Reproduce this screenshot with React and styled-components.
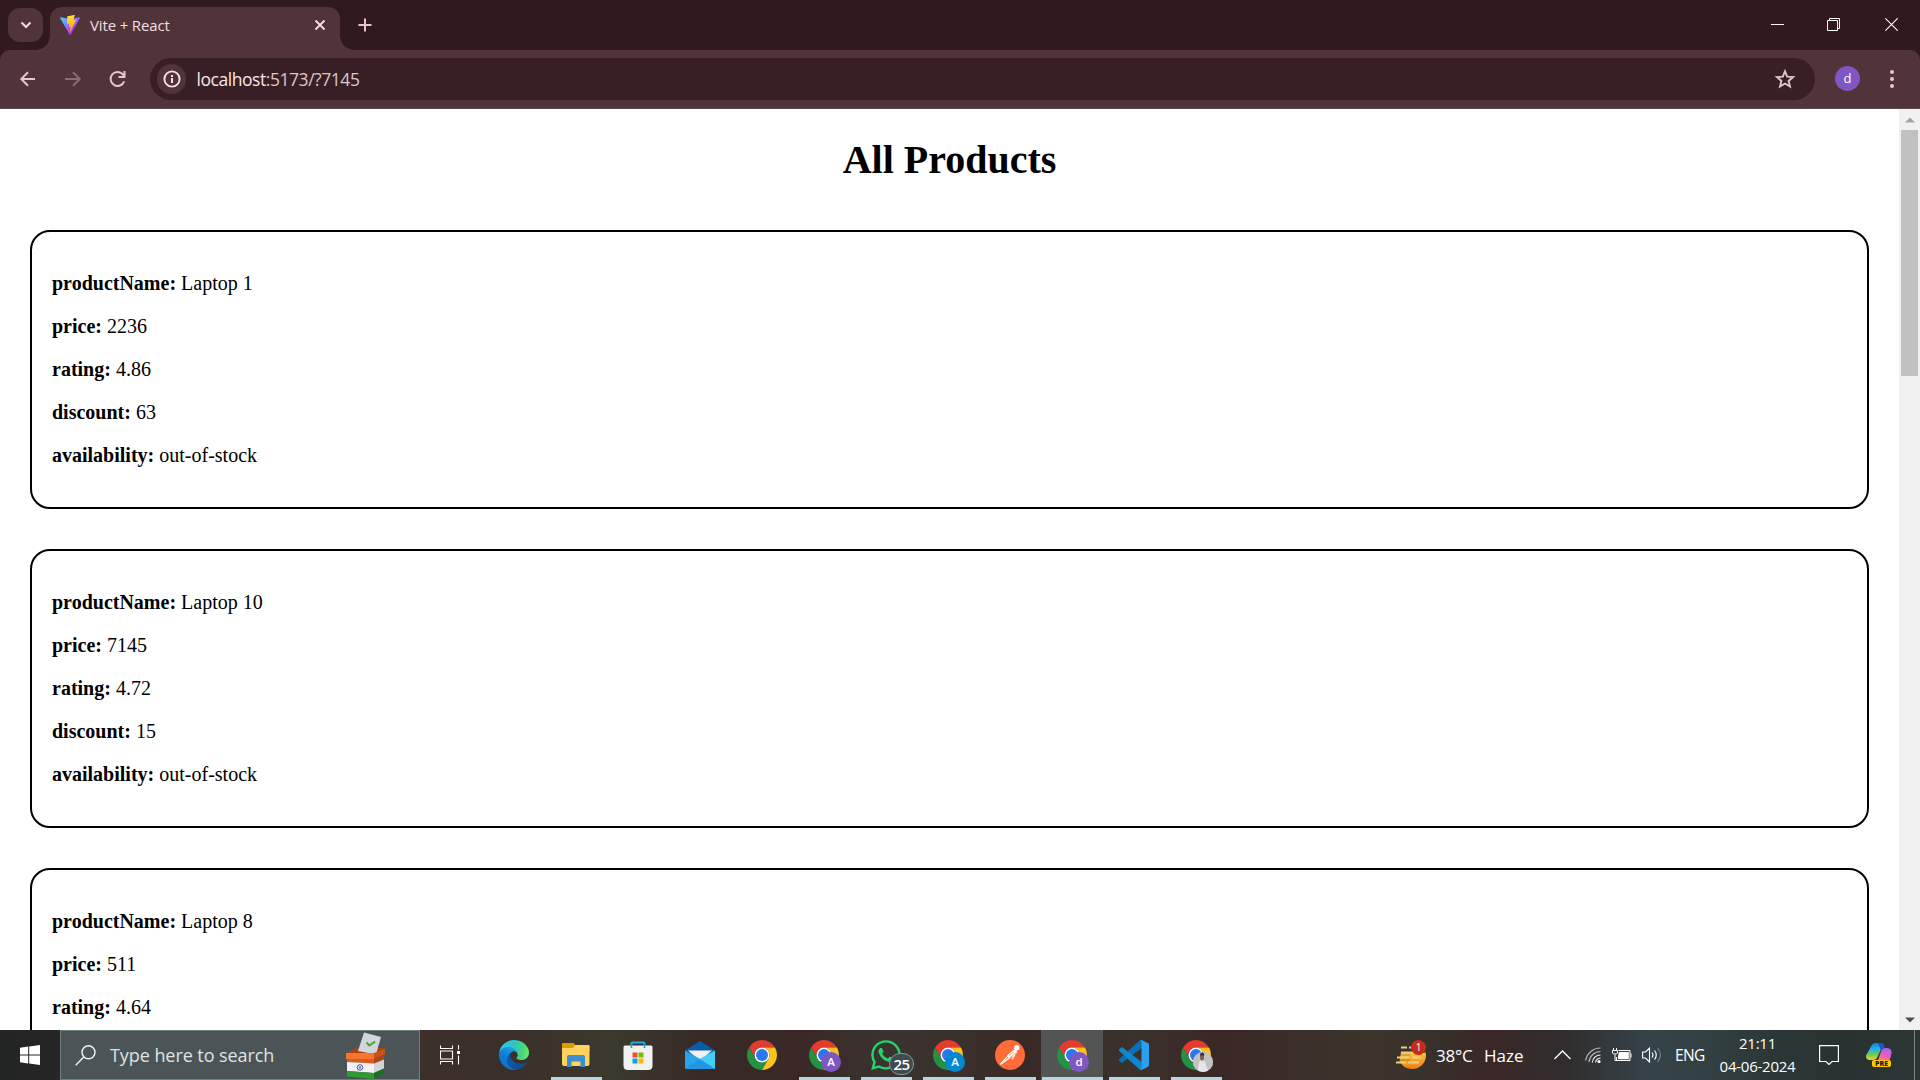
import React from 'react';
import styled, { createGlobalStyle } from 'styled-components';
import { FaWhatsapp } from 'react-icons/fa';

const GlobalStyle = createGlobalStyle`
  * { box-sizing: border-box; }
  html, body { margin: 0; padding: 0; overflow: hidden; }
  svg { display: block; flex: none; }
`;

const ui = `'Open Sans', 'Noto Sans', sans-serif`;
const colors = {
  frame: '#301a20',
  toolbar: '#50343a',
  omnibox: '#381f25',
  pink: '#e9c4cb',
};

/* ---------- Window ---------- */

const Screen = styled.div`
  width: 1920px;
  height: 1080px;
  display: flex;
  flex-direction: column;
  background: #fff;
  overflow: hidden;
  white-space: nowrap;
`;

const TabStrip = styled.header`
  height: 50px;
  flex: none;
  display: flex;
  align-items: flex-start;
  background: ${colors.frame};
  padding-left: 8px;
`;

const TabSearch = styled.div`
  width: 35px;
  height: 34px;
  margin: 8px 7px 0 0;
  border-radius: 12px;
  background: ${colors.toolbar};
  display: flex;
  align-items: center;
  justify-content: center;
`;

const Tab = styled.div`
  position: relative;
  width: 290px;
  height: 43px;
  margin-top: 7px;
  padding: 0 13px 7px 10px;
  border-radius: 12px 12px 0 0;
  background: ${colors.toolbar};
  display: flex;
  align-items: center;
  &::before,
  &::after {
    content: '';
    position: absolute;
    bottom: 0;
    width: 14px;
    height: 14px;
  }
  &::before {
    left: -14px;
    background: radial-gradient(circle at 0 0, transparent 13.5px, ${colors.toolbar} 14px);
  }
  &::after {
    right: -14px;
    background: radial-gradient(circle at 100% 0, transparent 13.5px, ${colors.toolbar} 14px);
  }
`;

const TabTitle = styled.span`
  flex: 1;
  margin-left: 10px;
  font: 15px/20px ${ui};
  letter-spacing: -0.15px;
  color: #f1dfe2;
`;

const NewTab = styled.div`
  width: 50px;
  height: 50px;
  display: flex;
  align-items: center;
  justify-content: center;
`;

const WindowControls = styled.div`
  margin-left: auto;
  display: flex;
`;

const WindowButton = styled.div`
  width: ${(p) => p.$w}px;
  height: 49px;
  display: flex;
  align-items: center;
  justify-content: center;
`;

const ToolbarBack = styled.div`
  flex: none;
  background: ${colors.frame};
`;

const Toolbar = styled.nav`
  height: 59px;
  padding: 8px 0 9px;
  display: flex;
  align-items: center;
  border-radius: 10px 10px 0 0;
  background: ${colors.toolbar};
  border-bottom: 1px solid #60464b;
`;

const NavGroup = styled.div`
  width: 150px;
  flex: none;
  padding-left: 17px;
  display: flex;
  gap: 25px;
`;

const Omnibox = styled.div`
  width: 1665px;
  flex: none;
  height: 42px;
  padding: 0 19px 0 7px;
  border-radius: 21px;
  background: ${colors.omnibox};
  display: flex;
  align-items: center;
`;

const SiteInfo = styled.div`
  width: 29px;
  height: 30px;
  border-radius: 15px;
  background: ${colors.toolbar};
  display: flex;
  align-items: center;
  justify-content: center;
`;

const Address = styled.span`
  flex: 1;
  margin-left: 10.5px;
  font: 17.5px/26px ${ui};
  letter-spacing: -0.45px;
  color: #dcc7cb;
  b {
    font-weight: 400;
    color: #f8e6e9;
  }
`;

const Avatar = styled.div`
  width: 25px;
  flex: none;
  height: 25px;
  margin-left: 20px;
  border-radius: 50%;
  background: #7e57c2;
  color: #fff;
  font: 13px/24px ${ui};
  text-align: center;
`;

const MenuSlot = styled.div`
  flex: 1;
  display: flex;
  padding-left: 30px;
`;

/* ---------- Page ---------- */

const Viewport = styled.main`
  height: 921px;
  flex: none;
  display: flex;
`;

const Page = styled.div`
  width: 1899px;
  height: 921px;
  overflow: hidden;
  padding: 27px 30px 0;
  font-family: 'Liberation Serif', 'Times New Roman', serif;
  color: #000;
`;

const Title = styled.h1`
  margin: 0 0 47px;
  font-size: 40px;
  line-height: 47px;
  text-align: center;
`;

const Card = styled.section`
  height: 279px;
  margin-bottom: 40px;
  padding: 40px 20px;
  border: 2px solid #000;
  border-radius: 20px;
  display: flex;
  flex-direction: column;
  gap: 20px;
`;

const Field = styled.p`
  margin: 0;
  font-size: 20px;
  line-height: 23px;
`;

const Scrollbar = styled.aside`
  width: 21px;
  height: 921px;
  padding: 0 2px;
  background: #f1f1f1;
  display: flex;
  flex-direction: column;
  justify-content: space-between;
`;

const ScrollArrow = styled.div`
  height: 21px;
  display: flex;
  align-items: center;
  justify-content: center;
`;

const ScrollThumb = styled.div`
  height: 246px;
  margin-bottom: auto;
  background: #c1c1c1;
`;

/* ---------- Taskbar ---------- */

const Taskbar = styled.footer`
  height: 50px;
  flex: none;
  display: flex;
  color: #fff;
  font-family: ${ui};
  background: linear-gradient(
    90deg,
    #232524 0, #252625 60px, #3d2f2a 420px, #3b2f29 500px, #3b392d 610px, #382a27 700px,
    #392826 800px, #3a3430 890px, #3a302c 960px, #392927 1020px, #3a322b 1130px, #3a2827 1220px,
    #3c352b 1370px, #37322c 1420px, #3a2727 1490px, #312e2f 1570px, #35444a 1650px, #344144 1700px,
    #2a3636 1780px, #293230 1850px, #2c3634 1914px
  );
`;

const Start = styled.div`
  width: 60px;
  display: flex;
  align-items: center;
  justify-content: center;
`;

const Search = styled.div`
  width: 360px;
  padding: 0 33px 0 14px;
  border: 1px solid #6f7f7f;
  background: #4b5557;
  display: flex;
  align-items: center;
`;

const SearchText = styled.span`
  flex: 1;
  margin-left: 14px;
  font-size: 18px;
  line-height: 24px;
  letter-spacing: -0.07px;
  color: #dfe3e4;
`;

const TaskView = styled.div`
  width: 63px;
  padding-left: 20px;
  display: flex;
  align-items: center;
`;

const AppSlot = styled.div`
  width: 62px;
  display: flex;
  flex-direction: column;
  align-items: center;
  background: ${(p) => (p.$active ? 'linear-gradient(90deg, transparent 0, transparent 0.5px, #535454 0.5px)' : 'none')};
  &::after {
    content: '';
    width: ${(p) => (p.$active ? 61 : 51)}px;
    height: 3px;
    background: ${(p) => (p.$running ? '#b9d5df' : 'transparent')};
  }
`;

const AppIcon = styled.div`
  position: relative;
  height: 47px;
  width: 30px;
  padding-top: 3px;
  display: flex;
  align-items: center;
  justify-content: center;
`;

const Badge = styled.span`
  position: absolute;
  left: ${(p) => (p.$count ? 18 : 12)}px;
  top: ${(p) => (p.$count ? 23 : 22)}px;
  width: ${(p) => (p.$count ? 25 : 20)}px;
  height: ${(p) => (p.$count ? 22 : 20)}px;
  border-radius: 11px;
  border: ${(p) => (p.$count ? '1px solid #86979d' : '0')};
  background: ${(p) => p.$bg};
  color: #fff;
  font-size: ${(p) => (p.$count ? 15 : 11.5)}px;
  font-weight: 600;
  line-height: 20px;
  text-align: center;
  letter-spacing: ${(p) => (p.$count ? '-0.5px' : '0')};
  overflow: hidden;
`;

const Tray = styled.div`
  margin-left: auto;
  width: 524px;
  display: flex;
  align-items: center;
`;

const Weather = styled.div`
  width: 158px;
  display: flex;
  align-items: center;
`;

const WeatherIcon = styled.div`
  position: relative;
  width: 30px;
  height: 50px;
  padding-top: 14px;
`;

const WeatherBadge = styled.span`
  position: absolute;
  left: 15px;
  top: 10px;
  width: 15px;
  height: 15px;
  border-radius: 50%;
  background: #c42b1c;
  font-size: 10px;
  line-height: 15px;
  text-align: center;
`;

const WeatherText = styled.span`
  margin-left: ${(p) => p.$gap}px;
  width: ${(p) => p.$w}px;
  padding-top: 1px;
  font-size: 17px;
  line-height: 24px;
  letter-spacing: ${(p) => p.$ls}px;
`;

const TrayIcon = styled.div`
  width: ${(p) => p.$w}px;
  display: flex;
`;

const Language = styled.span`
  width: 44px;
  font-size: 15.5px;
  letter-spacing: -0.7px;
`;

const Clock = styled.div`
  width: 77px;
  margin-right: 23px;
  font-size: 15px;
  line-height: 23px;
  letter-spacing: -0.25px;
  text-align: center;
  display: flex;
  flex-direction: column;
`;

const Copilot = styled.div`
  position: relative;
  width: 48px;
  height: 50px;
  padding-top: 12px;
`;

const PreTag = styled.span`
  position: absolute;
  left: 6px;
  top: 30px;
  width: 19px;
  height: 7px;
  border-radius: 2px;
  background: #ffc60a;
  color: #1c1c1c;
  font-size: 7px;
  font-weight: 800;
  line-height: 7px;
  text-align: center;
`;

const ShowDesktop = styled.div`
  width: 6px;
  height: 50px;
  border-left: 1px solid #7b8280;
`;

/* ---------- Icons ---------- */

const ViteLogo = () => (
  <svg width="20" height="20" viewBox="0 0 256 257">
    <defs>
      <linearGradient id="v1" x1="0" y1="8%" x2="58%" y2="78%">
        <stop offset="0" stopColor="#41d1ff" />
        <stop offset="1" stopColor="#bd34fe" />
      </linearGradient>
      <linearGradient id="v2" x1="43%" y1="2%" x2="50%" y2="89%">
        <stop offset="0" stopColor="#ffea83" />
        <stop offset=".083" stopColor="#ffdd35" />
        <stop offset="1" stopColor="#ffa800" />
      </linearGradient>
    </defs>
    <path fill="url(#v1)" d="M255.153 37.938 134.897 252.976c-2.483 4.44-8.862 4.466-11.382.048L.875 37.958c-2.746-4.814 1.371-10.646 6.827-9.67l120.385 21.517a6.537 6.537 0 0 0 2.322-.004l117.867-21.483c5.438-.991 9.574 4.796 6.877 9.62Z" />
    <path fill="url(#v2)" d="M185.432.063 96.44 17.501a3.268 3.268 0 0 0-2.634 3.014l-5.474 92.456a3.268 3.268 0 0 0 3.997 3.378l24.777-5.718c2.318-.535 4.413 1.507 3.936 3.838l-7.361 36.047c-.495 2.426 1.782 4.5 4.151 3.78l15.304-4.649c2.372-.72 4.652 1.36 4.15 3.788l-11.698 56.621c-.732 3.542 3.979 5.473 5.943 2.437l1.313-2.028 72.516-144.72c1.215-2.423-.88-5.186-3.54-4.672l-25.505 4.922c-2.396.462-4.435-1.77-3.759-4.114l16.646-57.705c.677-2.35-1.37-4.583-3.769-4.113Z" />
  </svg>
);

const Arrow = ({ flip, color }) => (
  <svg width="20" height="20" viewBox="0 0 20 20" fill="none" stroke={color} strokeWidth="2">
    <path d={flip ? 'M3 10h14M11 3.3l6.7 6.7-6.7 6.7' : 'M18 10H5M11 3.3 4.3 10l6.7 6.7'} />
  </svg>
);

const Reload = () => (
  <svg width="20" height="20" viewBox="0 0 20 20" fill="none" stroke={colors.pink} strokeWidth="2">
    <path d="M17.2 12.2a7 7 0 1 1-.9-6.3l1.200 1.700M17.500 2v6h-6" />
  </svg>
);

const Info = () => (
  <svg width="18" height="18" viewBox="0 0 18 18">
    <circle cx="9" cy="9" r="7.6" fill="none" stroke="#f5e3e6" strokeWidth="1.9" />
    <path d="M8 8h2v5H8zM8 5h2v1.9H8z" fill="#f5e3e6" />
  </svg>
);

const Star = () => (
  <svg width="22" height="22" viewBox="0 0 22 22" fill="none" stroke="#dcc7cb" strokeWidth="1.9">
    <path d="m11 3.300 2.200 5.300 5.900.500-4.500 3.800 1.400 5.600-5-3-5 3 1.400-5.600-4.500-3.800 5.900-.500z" />
  </svg>
);

const WindowsLogo = () => (
  <svg width="20" height="20" viewBox="0 0 20 20" fill="#fff">
    <path d="M0 2.8 8.2 1.6v7.9H0zM9.2 1.5 20 0v9.5H9.2zM0 10.5h8.2v7.9L0 17.2zM9.2 10.5H20V20L9.2 18.5z" />
  </svg>
);

const BallotBox = () => (
  <svg width="40" height="48" viewBox="0 0 40 48">
    <path d="M0 22.500 10 17h29l-11 7z" fill="#a8440f" />
    <path d="M18 1.500 35 6l-5 17.500L12 20z" fill="#d3d4dc" />
    <path d="m20.500 11.500 2.800 3 5.700-3.800" fill="none" stroke="#3fae2a" strokeWidth="2" />
    <path d="M0 22h28v6H0z" fill="#f5742f" />
    <path d="m28 22 11-4.500v6L28 28z" fill="#c9511a" />
    <path d="M1 28h27v4.500L1 31z" fill="#dd5a1c" />
    <path d="m28 28 10-4v4.500l-10 4z" fill="#b04412" />
    <path d="m1 31 27 1.500V42L1 40z" fill="#f3f3f5" />
    <path d="m28 32.500 10-4v9L28 42z" fill="#d3d4d8" />
    <path d="m1 40 27 2v6L1 45.500z" fill="#2f9a32" />
    <path d="m28 42 10-4.500V43l-10 5z" fill="#1a7021" />
    <circle cx="14" cy="36.500" r="2.800" fill="#dfe2f2" stroke="#4b57a6" strokeWidth="1" />
    <circle cx="14" cy="36.500" r="1" fill="#4b57a6" />
  </svg>
);

const TaskViewIcon = () => (
  <svg width="20" height="20" viewBox="0 0 20 20" fill="none" stroke="#fff" strokeWidth="1.100">
    <path d="M.5.500v3h12v-3M.5 6h12v8H.5zM.5 19.500v-3h12v3M18.500 0v4.500M18.500 10.500v9" />
    <path d="M17 6h3v3h-3z" fill="#fff" stroke="none" />
  </svg>
);

const Edge = () => (
  <svg width="30" height="30" viewBox="0 0 256 256">
    <defs>
      <linearGradient id="e1" x1="60" y1="178" x2="236" y2="178" gradientUnits="userSpaceOnUse">
        <stop offset="0" stopColor="#0c59a4" />
        <stop offset="1" stopColor="#114a8b" />
      </linearGradient>
      <linearGradient id="e2" x1="140" y1="90" x2="50" y2="220" gradientUnits="userSpaceOnUse">
        <stop offset="0" stopColor="#1b9de2" />
        <stop offset=".6" stopColor="#0a7bd6" />
        <stop offset="1" stopColor="#1273cc" />
      </linearGradient>
      <linearGradient id="e3" x1="10" y1="60" x2="250" y2="110" gradientUnits="userSpaceOnUse">
        <stop offset="0" stopColor="#35c1f1" />
        <stop offset=".45" stopColor="#2cc5c6" />
        <stop offset=".8" stopColor="#4bd37a" />
        <stop offset="1" stopColor="#66eb6e" />
      </linearGradient>
    </defs>
    <path fill="url(#e1)" d="M231.100 190.500c-3.400 1.800-6.900 3.400-10.500 4.700a101.500 101.500 0 0 1-35.900 6.400c-47.300 0-88.500-32.500-88.500-74.300a31.500 31.500 0 0 1 16.400-27.300c-42.800 1.800-53.800 46.400-53.800 72.500 0 74 68.100 81.400 82.800 81.400 7.900 0 19.800-2.300 27-4.600l1.300-.4a128.300 128.300 0 0 0 66.600-52.800 4 4 0 0 0-5.400-5.600z" />
    <path fill="url(#e2)" d="M105.700 241.400a79.200 79.200 0 0 1-22.700-21.400 80.700 80.700 0 0 1 29.500-120c3.200-1.500 8.500-4.100 15.600-4a32.400 32.400 0 0 1 25.700 13 31.900 31.900 0 0 1 6.300 18.700c0-.2 24.500-79.600-80-79.600-43.900 0-80 41.600-80 78.200a130.200 130.200 0 0 0 12.100 56 128 128 0 0 0 156.400 67 75.500 75.500 0 0 1-62.800-8z" />
    <path fill="url(#e3)" d="M152.300 148.900c-.8 1-3.300 2.500-3.300 5.700 0 2.600 1.700 5.100 4.700 7.300 14.400 10 41.500 8.600 41.600 8.600a59.600 59.600 0 0 0 30.300-8.300 61.400 61.400 0 0 0 30.400-52.900c.3-22.400-8-37.300-11.300-43.900C223.500 23.900 177.700 0 128 0A128 128 0 0 0 0 126.200c.5-36.500 36.800-66 80-66 3.500 0 23.500.3 42 10.100 16.300 8.600 24.900 19 30.800 29.200 6.200 10.700 7.300 24.100 7.300 29.500s-2.700 13.300-7.800 19.900z" />
  </svg>
);

const Explorer = () => (
  <svg width="28" height="24" viewBox="0 0 28 24">
    <path d="M0 1q0-1 1-1h10q1 0 1.500 1l.5 1H26q1.500 0 1.500 1.500V8H0z" fill="#e09a00" />
    <path d="M0 5h11l2-3h13.500q1 0 1 1v18q0 2-2 2H2q-2 0-2-2z" fill="#ffd35c" />
    <path d="M5 24V14q0-2 2-2h14q2 0 2 2v10h-4.500v-4.500q0-1-1-1h-7q-1 0-1 1V24z" fill="#3e8fd0" />
  </svg>
);

const Store = () => (
  <svg width="30" height="30" viewBox="0 0 30 30">
    <path d="M8.500 8V3.500q0-1 1-1h11q1 0 1 1V8" fill="none" stroke="#22aee4" strokeWidth="2" />
    <path d="M.5 7q0-1.500 1.500-1.500h26q1.500 0 1.500 1.500v18.500q0 4.500-4.500 4.500H5Q.5 30 .5 25.500z" fill="#f1f1f2" />
    <path d="M8.500 3v5M21.500 3v5" stroke="#1b9ad6" strokeWidth="1.600" />
    <path d="M9.500 12.500h5v5h-5z" fill="#f25022" />
    <path d="M15.500 12.500h5v5h-5z" fill="#7fba00" />
    <path d="M9.500 18.500h5v5h-5z" fill="#00a4ef" />
    <path d="M15.500 18.500h5v5h-5z" fill="#ffb900" />
  </svg>
);

const Mail = () => (
  <svg width="30" height="28" viewBox="0 0 30 28">
    <path d="M0 9.500 15 0l15 9.500v10H0z" fill="#0a5ca8" />
    <path d="M3 9.500h24L15 20z" fill="#f2f2f4" />
    <path d="M0 9.500 17 19l13 9H1q-1 0-1-1z" fill="#2aa3e8" />
    <path d="M30 9.500 14.500 18 30 28z" fill="#45cdf5" />
    <path d="M0 27.500 14.500 18 30 28H1z" fill="#1f97e4" />
  </svg>
);

const Chrome = () => (
  <svg width="30" height="30" viewBox="0 0 48 48">
    <path fill="#e33b2e" d="M24 12h20.780A24 24 0 0 0 3.220 12L13.600 30A12 12 0 0 1 24 12" />
    <path fill="#229342" d="M13.600 30 3.220 12A24 24 0 0 0 24 48l10.400-18a12 12 0 0 1-20.800 0" />
    <path fill="#fcc31e" d="M34.400 30 24 48a24 24 0 0 0 20.780-36H24a12 12 0 0 1 10.400 18" />
    <circle cx="24" cy="24" r="12" fill="#fff" />
    <circle cx="24" cy="24" r="9.600" fill="#2a78ee" />
  </svg>
);

const Postman = () => (
  <svg width="30" height="30" viewBox="0 0 30 30">
    <circle cx="15" cy="15" r="15" fill="#ff6c37" />
    <circle cx="21.700" cy="7.800" r="2.700" fill="#fff" />
    <path d="M19 9.500 12 15.500l2 2.700 4-1.700 4-4-.5-2.500z" fill="#fff" />
    <path d="m13 16-7.500 8M15 17.500l-9.500 7M20 14.500l-3 5" stroke="#fff" strokeWidth="1.100" />
    <path d="m14 15.500 5-4M15.500 17.300l5-4.300" stroke="#ff6c37" strokeWidth=".6" />
  </svg>
);

const VSCode = () => (
  <svg width="30" height="30" viewBox="0 0 100 100">
    <path fill="#0b6fb5" d="M96.460 10.800 75.860.880a6.230 6.230 0 0 0-7.110 1.200L1.300 63.580a4.170 4.170 0 0 0 0 6.170l5.510 5a4.170 4.170 0 0 0 5.320.240l81.200-61.600A4.130 4.130 0 0 1 100 16.700v-.240a6.250 6.250 0 0 0-3.540-5.630z" />
    <path fill="#1285cf" d="M96.460 89.200 75.860 99.120a6.230 6.230 0 0 1-7.110-1.200L1.300 36.420a4.170 4.170 0 0 1 0-6.170l5.510-5a4.170 4.170 0 0 1 5.320-.240l81.200 61.600A4.130 4.130 0 0 0 100 83.300v.240a6.250 6.250 0 0 1-3.540 5.630z" />
    <path fill="#2ba0ee" d="M75.860 99.130a6.230 6.230 0 0 1-7.110-1.210 3.660 3.660 0 0 0 6.250-2.590V4.670a3.660 3.660 0 0 0-6.250-2.590 6.230 6.230 0 0 1 7.110-1.200l20.600 9.900A6.250 6.250 0 0 1 100 16.410v67.180a6.250 6.250 0 0 1-3.540 5.630z" />
  </svg>
);

const PersonPhoto = () => (
  <svg width="20" height="20" viewBox="0 0 20 20">
    <rect width="20" height="20" fill="#c3c1c2" />
    <path d="M4.500 20 6 10q3-3 6 0l3.500 10z" fill="#e4e4e9" />
    <ellipse cx="9" cy="5" rx="2" ry="3.500" fill="#7a5d53" />
    <path d="M7 3.500q0-3 2.200-3t2.100 3z" fill="#3c3030" />
  </svg>
);

const HazeIcon = () => (
  <svg width="30" height="26" viewBox="0 0 30 26">
    <defs>
      <linearGradient id="hz" x1="0" y1="0" x2="0" y2="1">
        <stop offset="0" stopColor="#ffc533" />
        <stop offset="1" stopColor="#f07c12" />
      </linearGradient>
    </defs>
    <path d="M5 8.500h24.500A13.300 13.300 0 0 1 15.500 25Q7 24.500 3.500 17z" fill="url(#hz)" />
    <path d="M5 3.500h6M13 3.500h4M5 8.500h16M1 13.500h12M16 13.500h9M0 18.500h10M12 18.500h11" stroke="#e9cf86" strokeWidth="2.200" />
    <path d="M0 16h14M5 11h9" stroke="#3a2b28" strokeOpacity=".35" strokeWidth="1" />
  </svg>
);

const Chevron = () => (
  <svg width="17" height="10" viewBox="0 0 17 10" fill="none" stroke="#fff" strokeWidth="1.300">
    <path d="m.5 9 8-8 8 8" />
  </svg>
);

const Wifi = () => (
  <svg width="17" height="18" viewBox="0 0 17 18" fill="none" strokeWidth="1.200">
    <path d="M.7 14.500A15 15 0 0 1 15.500 2M4 16A11.500 11.500 0 0 1 15.500 5.500" stroke="#b4b4b4" />
    <path d="M7.300 16.500A8 8 0 0 1 15.500 9M10.500 16.500q.5-4 5-4.500" stroke="#eee" />
    <circle cx="14" cy="15.500" r="1.600" fill="#fff" />
  </svg>
);

const Battery = () => (
  <svg width="20" height="15" viewBox="0 0 20 15" fill="none" stroke="#fff">
    <path d="M6.500 2.500h11.500v10H4.500V9M19 5.500v4" />
    <path d="M7 4h9.800v7.300H6V8z" fill="#fff" stroke="none" />
    <path d="M1.500 0v2M4.500 0v2M.5 2.500h5v2.500l-1 1h-3l-1-1zM3 6.500v6h2" />
  </svg>
);

const Volume = () => (
  <svg width="20" height="18" viewBox="0 0 20 18" fill="none" stroke="#fff" strokeWidth="1.100">
    <path d="M.6 6h2.900l4-4v14l-4-4H.6zM10 6.500q2 2.500 0 5M12.500 4.500q3.500 4.500 0 9" />
    <path d="M15.500 2q6 7 0 14" stroke="#788285" />
  </svg>
);

const Notification = () => (
  <svg width="20" height="20" viewBox="0 0 20 20" fill="none" stroke="#fff" strokeWidth="1.200">
    <path d="M.6.600h18.800v15.900h-6.400l-3 3-3-3H.6z" />
  </svg>
);

const CopilotIcon = () => (
  <svg width="26" height="24" viewBox="0 0 26 24">
    <defs>
      <linearGradient id="c1" x1="0" y1="0" x2="0" y2="1">
        <stop offset="0" stopColor="#1c7de4" />
        <stop offset=".35" stopColor="#1fb3e6" />
        <stop offset=".65" stopColor="#6bc65a" />
        <stop offset="1" stopColor="#f1d12a" />
      </linearGradient>
      <linearGradient id="c2" x1=".5" y1="0" x2="0" y2="1">
        <stop offset="0" stopColor="#b25ff0" />
        <stop offset=".5" stopColor="#e85fb4" />
        <stop offset="1" stopColor="#f58a6a" />
      </linearGradient>
    </defs>
    <path d="M12 18 15.500 8.500q1-2.500 3.500-2.500h2q5 .5 4.500 5-.5 4-2 7z" fill="url(#c2)" />
    <path d="M5 4.500Q6.500 1 9.500 1H15q2.500 0 3 3l.5 2q-3 0-4 2.500L11 16q-1 2-4 2H3q-4-.6-2.700-5z" fill="url(#c1)" />
    <path d="M11 1h4q2.500 0 3 3l.5 2q-2.500 0-4 2Q13.500 3 11 1" fill="#1759c9" />
  </svg>
);

/* ---------- Data ---------- */

const products = [
  { productName: 'Laptop 1', price: 2236, rating: 4.86, discount: 63, availability: 'out-of-stock' },
  { productName: 'Laptop 10', price: 7145, rating: 4.72, discount: 15, availability: 'out-of-stock' },
  { productName: 'Laptop 8', price: 511, rating: 4.64 },
];

const apps = [
  { icon: <Edge /> },
  { icon: <Explorer />, running: true },
  { icon: <Store /> },
  { icon: <Mail /> },
  { icon: <Chrome /> },
  { icon: <Chrome />, running: true, badge: 'A', bg: '#7e57c2' },
  { icon: <FaWhatsapp size={34} color="#25d366" />, running: true, badge: '25', bg: '#3f4b50', count: true },
  { icon: <Chrome />, running: true, badge: 'A', bg: '#0288d1' },
  { icon: <Postman />, running: true },
  { icon: <Chrome />, running: true, active: true, badge: 'd', bg: '#7e57c2' },
  { icon: <VSCode />, running: true },
  { icon: <Chrome />, running: true, badge: <PersonPhoto />, bg: '#c3c1c2' },
];

export default function App() {
  return (
    <Screen>
      <GlobalStyle />
      <TabStrip>
        <TabSearch>
          <svg width="12" height="8" viewBox="0 0 12 8" fill="none" stroke="#f1dfe2" strokeWidth="2">
            <path d="m1.500 1.500 4.500 4.500 4.500-4.500" />
          </svg>
        </TabSearch>
        <Tab>
          <ViteLogo />
          <TabTitle>Vite + React</TabTitle>
          <svg width="14" height="12" viewBox="0 0 14 12" stroke="#f1dfe2" strokeWidth="1.900">
            <path d="m2.500 1.500 9 9M11.500 1.500l-9 9" />
          </svg>
        </Tab>
        <NewTab>
          <svg width="14" height="14" viewBox="0 0 14 14" stroke={colors.pink} strokeWidth="2">
            <path d="M7 .5v13M.5 7h13" />
          </svg>
        </NewTab>
        <WindowControls>
          <WindowButton $w={53}>
            <svg width="13" height="2"><rect y="0" width="13" height="1" fill="#fff" /></svg>
          </WindowButton>
          <WindowButton $w={59}>
            <svg width="13" height="13" viewBox="0 0 13 13" fill="none" stroke="#fff">
              <path d="M.5 2.500h10v10H.5zM2.500 2.500v-2h10v10h-2" />
            </svg>
          </WindowButton>
          <WindowButton $w={57}>
            <svg width="13" height="13" viewBox="0 0 13 13" stroke="#fff" strokeWidth="1.100">
              <path d="m.3.300 12.400 12.400M12.700.3.300 12.700" />
            </svg>
          </WindowButton>
        </WindowControls>
      </TabStrip>
      <ToolbarBack>
        <Toolbar>
          <NavGroup>
            <Arrow color={colors.pink} />
            <Arrow flip color="#8b6d73" />
            <Reload />
          </NavGroup>
          <Omnibox>
            <SiteInfo><Info /></SiteInfo>
            <Address><b>localhost</b>:5173/?7145</Address>
            <Star />
          </Omnibox>
          <Avatar>d</Avatar>
          <MenuSlot>
            <svg width="4" height="18" viewBox="0 0 4 18" fill={colors.pink}>
              <circle cx="2" cy="2" r="2" />
              <circle cx="2" cy="9" r="2" />
              <circle cx="2" cy="16" r="2" />
            </svg>
          </MenuSlot>
        </Toolbar>
      </ToolbarBack>

      <Viewport>
        <Page>
          <Title>All Products</Title>
          {products.map((product) => (
            <Card key={product.productName}>
              {Object.entries(product).map(([key, value]) => (
                <Field key={key}><b>{key}:</b> {value}</Field>
              ))}
            </Card>
          ))}
        </Page>
        <Scrollbar>
          <ScrollArrow>
            <svg width="10" height="6"><path d="M0 5.500 5 .5l5 5z" fill="#a3a3a3" /></svg>
          </ScrollArrow>
          <ScrollThumb />
          <ScrollArrow>
            <svg width="10" height="6"><path d="M0 .5 5 5.500l5-5z" fill="#505050" /></svg>
          </ScrollArrow>
        </Scrollbar>
      </Viewport>

      <Taskbar>
        <Start><WindowsLogo /></Start>
        <Search>
          <svg width="21" height="21" viewBox="0 0 21 21" fill="none" stroke="#f2f4f4" strokeWidth="1.400">
            <circle cx="13.500" cy="7.300" r="6.500" />
            <path d="M8.800 12 .7 20.200" />
          </svg>
          <SearchText>Type here to search</SearchText>
          <BallotBox />
        </Search>
        <TaskView><TaskViewIcon /></TaskView>
        {apps.map((app, i) => (
          <AppSlot key={i} $running={app.running} $active={app.active}>
            <AppIcon>
              {app.icon}
              {app.badge && <Badge $bg={app.bg} $count={app.count}>{app.badge}</Badge>}
            </AppIcon>
          </AppSlot>
        ))}
        <Tray>
          <Weather>
            <WeatherIcon>
              <HazeIcon />
              <WeatherBadge>1</WeatherBadge>
            </WeatherIcon>
            <WeatherText $gap={10} $w={38} $ls={-0.2}>38°C</WeatherText>
            <WeatherText $gap={10} $w={40} $ls={0}>Haze</WeatherText>
          </Weather>
          <TrayIcon $w={31}><Chevron /></TrayIcon>
          <TrayIcon $w={27}><Wifi /></TrayIcon>
          <TrayIcon $w={30}><Battery /></TrayIcon>
          <TrayIcon $w={33}><Volume /></TrayIcon>
          <Language>ENG</Language>
          <Clock><span>21:11</span><span>04-06-2024</span></Clock>
          <TrayIcon $w={47}><Notification /></TrayIcon>
          <Copilot>
            <CopilotIcon />
            <PreTag>PRE</PreTag>
          </Copilot>
          <ShowDesktop />
        </Tray>
      </Taskbar>
    </Screen>
  );
}
